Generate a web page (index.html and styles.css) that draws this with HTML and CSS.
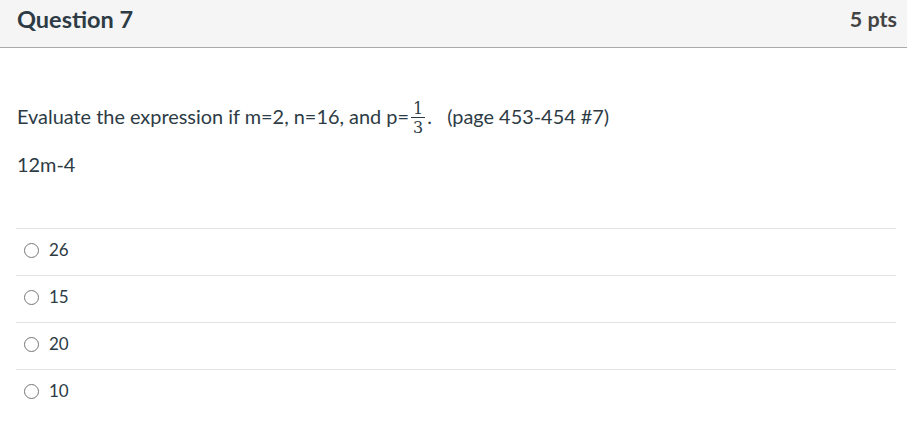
FILE: index.html
```html
<!DOCTYPE html>
<html>
<head>
<meta charset="utf-8">
<link rel="stylesheet" href="styles.css">
</head>
<body>
<div class="question">
  <div class="header">
    <div class="title">Question 7</div>
    <div class="pts">5 pts</div>
  </div>
  <div class="content">
    <p class="text first">Evaluate the expression if m=2, n=16, and p=<span class="frac"><span class="num">1</span><span class="den">3</span></span><span class="dot">.</span>&nbsp;&nbsp; (page 453-454 #7)</p>
    <p class="text">12m-4</p>
  </div>
  <div class="answers">
    <div class="answer"><span class="radio"></span><span class="label">26</span></div>
    <div class="answer"><span class="radio"></span><span class="label">15</span></div>
    <div class="answer"><span class="radio"></span><span class="label">20</span></div>
    <div class="answer"><span class="radio"></span><span class="label">10</span></div>
  </div>
</div>
</body>
</html>
```
FILE: styles.css
```css
html, body {
  margin: 0;
  padding: 0;
  background: #ffffff;
}
body {
  font-family: Lato, "Liberation Sans", sans-serif;
  color: #2d3b45;
}
.header {
  background: #f5f5f5;
  border-bottom: 1px solid #a9a9a9;
  display: flex;
  justify-content: space-between;
  align-items: center;
  padding: 0 10px 10px 17px;
  box-sizing: border-box;
  height: 48px;
}
.title {
  font-weight: 700;
  font-size: 23.5px;
}
.pts {
  font-weight: 700;
  font-size: 21.5px;
  color: #444;
}
.content {
  padding: 54px 17px 0 17px;
}
.text {
  margin: 0 0 26px 0;
  font-size: 19.9px;
  line-height: 23px;
}
.text.first {
  margin-bottom: 17px;
}
.frac {
  display: inline-flex;
  flex-direction: column;
  align-items: center;
  vertical-align: middle;
  font-family: "DejaVu Serif", "Liberation Serif", serif;
  font-size: 16px;
  line-height: 15px;
  margin: 0 1px 0 2px;
  position: relative;
  top: -1px;
}
.num {
  border-bottom: 1px solid #2d3b45;
  padding: 0 2px 1px;
}
.den {
  padding-top: 2px;
}
.dot {
  margin-left: 1px;
}
.answers {
  margin: 52px 11px 0 16px;
}
.answer {
  height: 47px;
  border-top: 1px solid #e3e3e3;
  box-sizing: border-box;
  display: flex;
  align-items: center;
  padding-left: 8px;
  padding-bottom: 6px;
}
.radio {
  width: 13px;
  height: 13px;
  border: 1px solid #777;
  border-radius: 50%;
  margin-right: 10px;
  margin-top: 2px;
}
.label {
  font-size: 17px;
}
```
